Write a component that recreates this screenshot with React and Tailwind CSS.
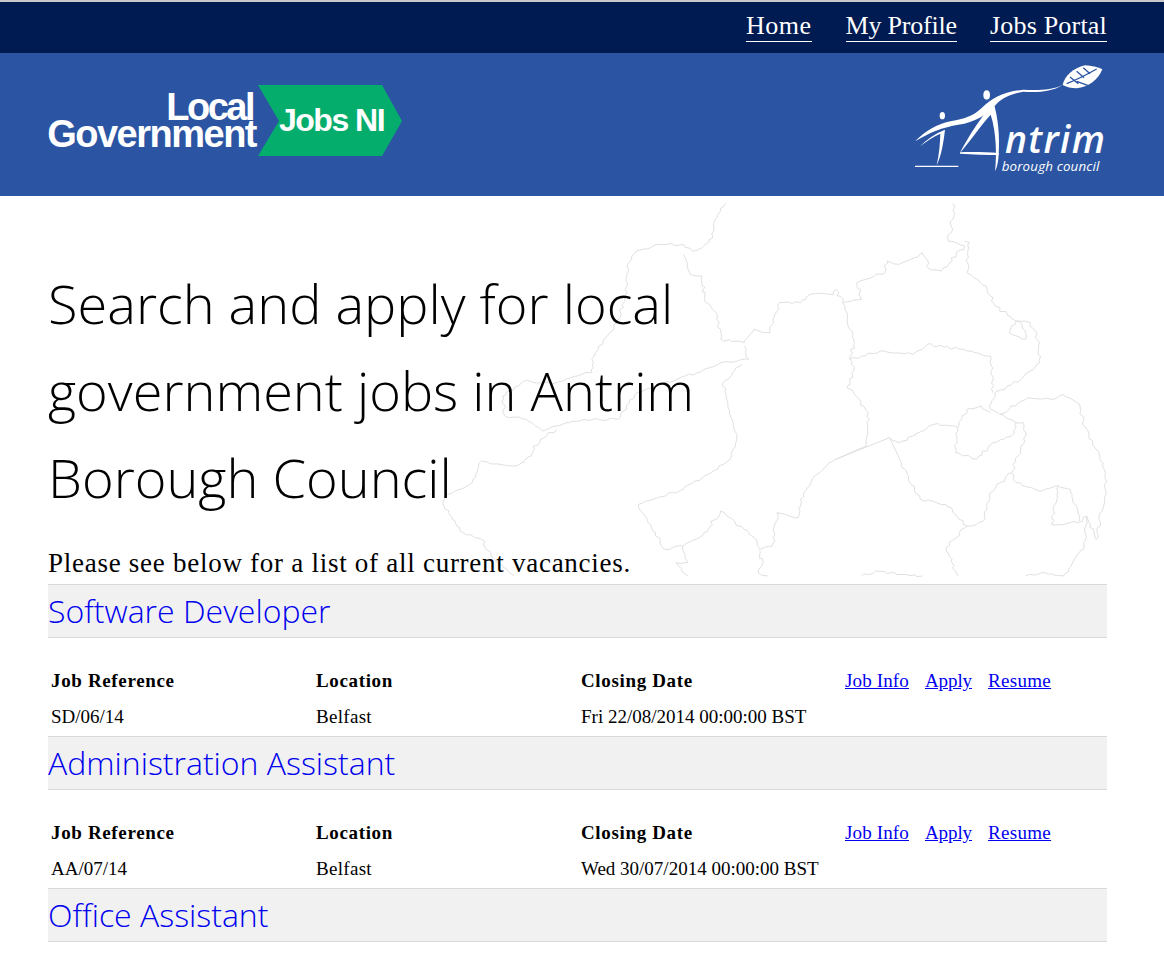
const serif = "font-['Liberation_Serif','Times_New_Roman',serif]";
const openSans = "font-['Open_Sans',sans-serif]";

const mapLines = [
  "630,22 605,80 603,125 580,155 560,165 540,145 490,145 470,155 440,165 420,210 420,290 400,380 350,480 345,530 300,545 270,560 200,555 155,600 160,660 205,670 240,705 270,690 330,670 400,670 440,590",
  "540,175 555,235 580,240 585,310 610,350 620,430 670,440 690,400 725,410 745,320 790,320 810,295 860,295 865,280 880,320 905,440 895,490 905,515 890,570 935,650 930,750",
  "880,320 920,310 910,260 970,230 975,195 1000,205 1050,170 1065,220 1090,225 1140,150 1105,135 1115,70 1115,22",
  "1140,135 1150,140 1145,230 1185,270 1205,330 1250,375 1235,410 1270,430 1262,385 1250,375 1280,380 1300,440 1300,500 1260,550 1205,590 1195,640 1215,655 1250,680",
  "895,490 960,465 1030,475 1060,445 1130,460 1195,480 1200,590",
  "670,450 680,490 620,500 570,530 480,570 440,590",
  "665,505 625,560 640,660 655,715 640,790 600,830 540,880 445,925 465,980 500,1060 540,1050 580,1020 620,945 680,1010 705,1060 730,1050 740,950 785,965 790,910 820,840 865,790",
  "1005,800 1020,850 1045,910 1100,925 1145,990 1180,975 1195,890 1240,830 1260,750 1270,720 1265,680 1250,680",
  "980,725 1000,740 1075,685 1125,695 1145,640 1175,630 1195,650",
  "1125,695 1120,770 1165,790 1200,740 1240,720 1250,680",
  "1215,655 1275,605 1325,610 1350,595 1385,625 1395,690 1420,760 1440,830 1440,880 1420,1030 1400,960 1380,980 1325,985 1335,920 1340,870 1300,885 1250,860 1240,830",
  "1340,870 1365,880 1385,975",
  "1145,990 1100,1055 1125,1140",
  "1400,960 1395,1050 1370,1100 1350,1140",
  "700,1060 710,1100 700,1130 720,1140",
  "540,1050 550,1100 525,1100 550,1140",
  "920,1140 950,1125 1050,1140",
  "1270,1140 1310,1130 1350,1140",
  "270,700 235,730 200,800 170,810 110,795 90,860 30,900 30,930 70,1010 110,1030 130,1080 180,1140",
];

// Roughens a traced outline so it reads as a coastline rather than straight segments.
function wiggle(line, seed) {
  const pts = line.split(" ").map((p) => p.split(",").map(Number));
  let s = seed + 7;
  const rnd = () => {
    s = (s * 9301 + 49297) % 233280;
    return s / 233280 - 0.5;
  };
  const out = [pts[0]];
  for (let i = 1; i < pts.length; i++) {
    const [ax, ay] = pts[i - 1];
    const [bx, by] = pts[i];
    const n = Math.max(1, Math.round(Math.hypot(bx - ax, by - ay) / 9));
    for (let k = 1; k <= n; k++) {
      const t = k / n;
      const j = k === n ? 0 : 1;
      out.push([ax + (bx - ax) * t + rnd() * 8 * j, ay + (by - ay) * t + rnd() * 8 * j]);
    }
  }
  return out.map((p) => p[0].toFixed(1) + "," + p[1].toFixed(1)).join(" ");
}

function MapBackdrop() {
  return (
    <svg
      className="absolute left-[430px] top-0 w-[734px] h-[390px]"
      viewBox="0 0 1565 1170"
      preserveAspectRatio="none"
      fill="none"
      aria-hidden="true"
    >
      {mapLines.map((l, i) => (
        <polyline key={i} points={wiggle(l, i * 31)} stroke="#e0e0e0" strokeWidth="1" vectorEffect="non-scaling-stroke" strokeLinejoin="round" />
      ))}
      <polyline points="930,750 865,790" stroke="#e0e0e0" strokeWidth="1" vectorEffect="non-scaling-stroke" />
      <polyline points="865,790 980,725 1005,800" stroke="#e0e0e0" strokeWidth="1" vectorEffect="non-scaling-stroke" />
    </svg>
  );
}

function JobsLogo() {
  return (
    <div className="flex items-center h-[72px] font-['Liberation_Sans',Arial,sans-serif] font-bold text-white">
      <div className="w-[210px] flex flex-col items-end text-[38px] leading-[27px]">
        <span className="pr-[5px] tracking-[-2.5px]">Local</span>
        <span className="pr-[2px] tracking-[-1.5px]">Government</span>
      </div>
      <div className="relative w-[144px] h-[72px]">
        <svg className="absolute inset-0" width="144" height="72" viewBox="0 0 144 72">
          <polygon points="0,0 124,0 144,36 124,71 0,71 21,36" fill="#05ad6d" />
        </svg>
        <span className="absolute left-[21px] top-[20px] text-[32px] leading-[30px] tracking-[-1.5px] whitespace-nowrap">Jobs NI</span>
      </div>
    </div>
  );
}

function AntrimLogo() {
  return (
    <svg width="200" height="116" viewBox="0 0 600 348" className="mt-[10px] -mr-[3px]">
      {/* coords: zoomed crop minus (90, 190) */}
      <g fill="#fff" transform="translate(-90,-190)">
        <path d="M548 256 C553 230 580 205 615 197 C635 198 655 203 667 209 C655 240 625 262 590 266 C575 266 558 262 548 256 Z" />
        <path d="M105 425 C135 395 170 372 215 364 C250 358 280 350 305 325 C335 295 375 275 430 270 C470 273 515 272 548 256 C515 277 470 279 430 276 C385 283 360 300 345 318 C320 345 285 368 235 375 C190 382 145 400 105 425 Z" />
        <ellipse cx="320" cy="286" rx="10" ry="14" />
        <ellipse cx="187" cy="348" rx="8" ry="11" />
        <path d="M120 440 C140 420 165 402 195 390 C190 430 185 465 170 497 C178 462 180 430 181 402 C160 410 140 425 120 440 Z" />
        <path d="M105 498 L235 498 L235 502 L105 502 Z" />
        <path d="M340 308 C354 350 360 410 356 465 C355 485 352 500 345 515 C350 470 350 400 332 345 C300 380 270 425 240 460 C255 430 290 370 340 308 Z" />
        <path d="M240 458 C280 456 320 458 356 460 L356 466 C320 466 280 464 240 462 Z" />
      </g>
      <g fill="none" stroke="#2b55a3" strokeWidth="4" transform="translate(-90,-190)">
        <path d="M560 252 C590 240 620 225 650 208" />
        <path d="M590 215 L612 234 M570 232 L595 252 M610 204 L630 222 M590 245 L625 258" />
      </g>
      <text x="285" y="270" fill="#fff" fontSize="112" fontWeight="600" fontStyle="italic" fontFamily="'Open Sans',sans-serif" letterSpacing="4">ntrim</text>
      <text x="275" y="325" fill="#fff" fontSize="40" fontStyle="italic" fontFamily="'Open Sans',sans-serif" letterSpacing="0.5">borough council</text>
    </svg>
  );
}

function NavLink({ children, className }) {
  return (
    <a href="#" className={`block border-b border-white text-white text-[26px] leading-[28px] pb-[1px] ${className}`}>
      {children}
    </a>
  );
}

function Job({ title, reference, closing }) {
  return (
    <section>
      <h2 className={`h-[54px] bg-[#f1f1f1] border-y border-[#d8d8d8] ${openSans} font-light text-[32px] leading-[52px] text-[#0000ee] whitespace-nowrap`}>
        <a href="#">{title}</a>
      </h2>
      {reference && (
        <div className={`grid grid-cols-[265px_265px_264px_1fr] pl-[3px] pt-[25px] pb-[1px] text-[19px] leading-[36px] text-black ${serif}`}>
          <div className="font-bold tracking-[0.65px]">Job Reference</div>
          <div className="font-bold tracking-[0.65px]">Location</div>
          <div className="font-bold tracking-[0.65px]">Closing Date</div>
          <div className="flex gap-4 text-[#0000ee] underline">
            <a href="#" className="tracking-[0.15px]">Job Info</a>
            <a href="#" className="-tracking-[0.1px]">Apply</a>
            <a href="#" className="tracking-[0.3px]">Resume</a>
          </div>
          <div>{reference}</div>
          <div className="tracking-[0.3px]">Belfast</div>
          <div className="col-span-2">{closing}</div>
        </div>
      )}
    </section>
  );
}

export default function App() {
  return (
    <div className={`min-h-[954px] bg-white ${serif}`}>
      <div className="h-[53px] bg-[#001b52] border-t-2 border-[#c8c8c8] flex justify-end items-start gap-[33px] pr-[57px] pt-[10px]">
        <NavLink className="tracking-[0.5px] mr-px">Home</NavLink>
        <NavLink className="-tracking-[0.2px]">My Profile</NavLink>
        <NavLink className="tracking-[0.2px]">Jobs Portal</NavLink>
      </div>
      <header className="h-[143px] bg-[#2b55a3] flex justify-between items-start pl-[48px] pr-[57px] pt-[32px]">
        <JobsLogo />
        <div className="-mt-[32px]"><AntrimLogo /></div>
      </header>
      <main className="relative h-[388px] px-[48px] overflow-hidden">
        <MapBackdrop />
        <h1 className={`relative w-[700px] pt-[64px] ${openSans} font-light text-[54.1px] leading-[87px] text-black`}>
          Search and apply for local government jobs in Antrim Borough Council
        </h1>
        <p className="relative mt-[24px] text-[27px] tracking-[0.73px] leading-[36px] text-black whitespace-nowrap">Please see below for a list of all current vacancies.</p>
      </main>
      <div className="ml-[48px] w-[1059px]">
        <Job title="Software Developer" reference="SD/06/14" closing="Fri 22/08/2014 00:00:00 BST" />
        <Job title="Administration Assistant" reference="AA/07/14" closing="Wed 30/07/2014 00:00:00 BST" />
        <Job title="Office Assistant" />
      </div>
    </div>
  );
}
